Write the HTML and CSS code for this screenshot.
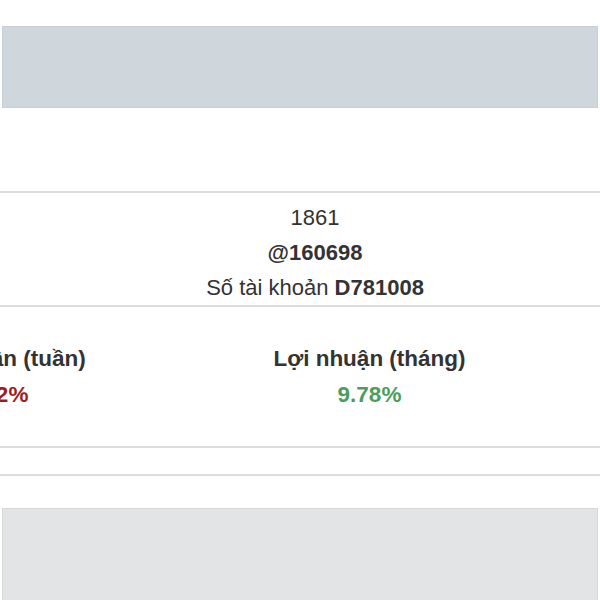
FILE: index.html
```html
<!DOCTYPE html>
<html lang="vi">
<head>
    <meta charset="UTF-8">
    <meta name="viewport" content="width=device-width, initial-scale=1.0">
    <title>Tài khoản</title>
    <link rel="stylesheet" href="styles.css">
</head>
<body>
    <div class="page">
        <div class="panel panel-top"></div>

        <div class="cover"></div>

        <div class="profile">
            <div class="profile-id">1861</div>
            <div class="profile-user">@160698</div>
            <div class="profile-account">Số tài khoản <b>D781008</b></div>
        </div>

        <div class="stats">
            <div class="stats-row">
                <div class="stat">
                    <div class="stat-title">Lợi nhuận (tuần)</div>
                    <div class="stat-value down">5.12%</div>
                </div>
                <div class="stat">
                    <div class="stat-title">Lợi nhuận (tháng)</div>
                    <div class="stat-value up">9.78%</div>
                </div>
            </div>
        </div>

        <div class="empty-row"></div>

        <div class="panel panel-bottom"></div>
    </div>
</body>
</html>
```

FILE: styles.css
```css
/* Basic Styles */
body {
    font-family: "Liberation Sans", Arial, sans-serif;
    margin: 0;
    padding: 0;
    background-color: #fff;
    color: #333;
    font-size: 22px;
}

.page {
    padding-top: 26px;
    overflow: hidden;
}

.panel {
    margin: 0 2px;
    border: 1px solid #c9d0d5;
}

.panel-top {
    height: 80px;
    background-color: #cfd7dd;
}

.cover {
    height: 83px;
}

.profile {
    border-top: 2px solid #dcdcdc;
    padding: 7px 0 0 30px;
    text-align: center;
    line-height: 35px;
}

.profile-user {
    font-weight: bold;
}

.stats {
    border-top: 2px solid #dcdcdc;
    border-bottom: 2px solid #dcdcdc;
    padding: 34px 0 33px;
    overflow: hidden;
}

.stats-row {
    display: flex;
    margin-left: -190px;
}

.stat {
    flex: 0 0 373px;
    text-align: center;
    font-weight: bold;
    font-size: 22.5px;
    line-height: 36px;
}

.stat-title {
    color: #333;
}

.stat-value.up {
    color: #4a9e5c;
}

.stat-value.down {
    color: #9e1c1c;
}

.empty-row {
    height: 26px;
    border-bottom: 2px solid #dcdcdc;
    margin-bottom: 32px;
}

.panel-bottom {
    height: 120px;
    background-color: #e3e4e6;
    border-color: #d6d7d9;
}
```
